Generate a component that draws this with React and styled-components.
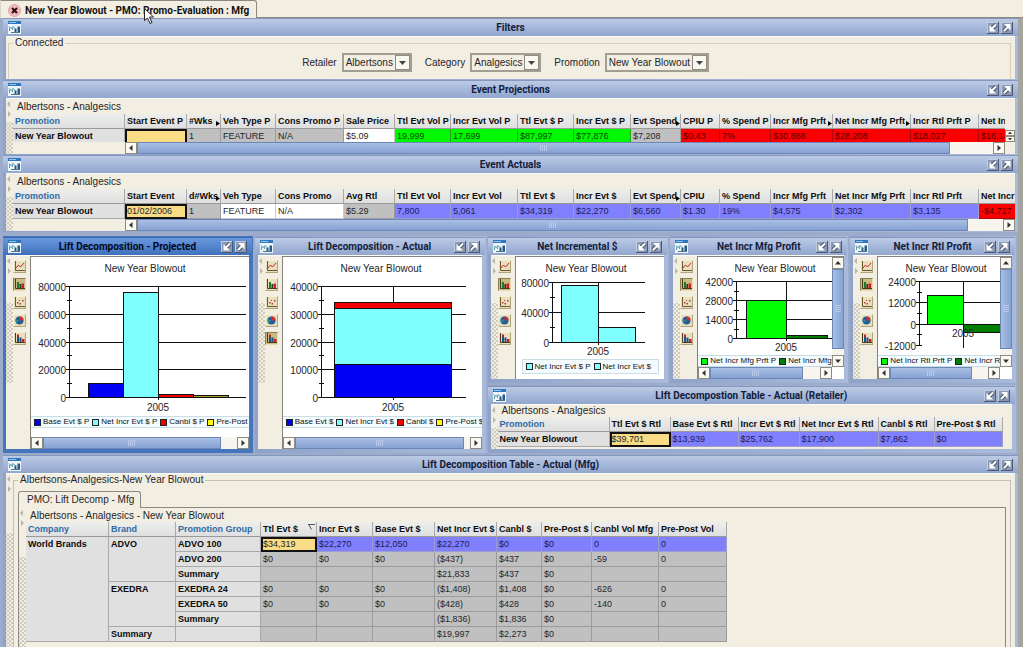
import { useState } from "react";
import styled, { createGlobalStyle, css } from "styled-components";

const GlobalStyle = createGlobalStyle`
  * {
    box-sizing: border-box;
  }
  body {
    margin: 0;
    background: #f2eee1;
    color: #26262a;
    font-family: "Liberation Sans", Arial, sans-serif;
    font-size: 10px;
    line-height: 12px;
  }
  button, select {
    font: inherit;
    color: inherit;
    margin: 0;
    padding: 0;
  }
`;

const Page = styled.div`
  display: flex;
  flex-direction: column;
  min-height: 100vh;
  overflow: hidden;
`;

const TabBar = styled.header`
  display: flex;
  height: 18px;
  border-bottom: 1px solid #8a8880;
`;

const MainTab = styled.div`
  position: relative;
  display: flex;
  align-items: center;
  gap: 4px;
  height: 18px;
  padding: 2px 7px 0 7px;
  background: #f2eee1;
  border: 1px solid #8a8880;
  border-left-color: #d8d4c8;
  border-bottom: 0;
  border-radius: 0 3px 0 0;
  font-family: Roboto, Arial, sans-serif;
  font-weight: bold;
  color: #111;
`;

const CloseButton = styled.button`
  display: flex;
  border: 0;
  background: none;
`;

const Pointer = styled.svg`
  position: absolute;
  left: 143px;
  top: 7px;
  z-index: 2;
`;

const Desktop = styled.main`
  display: flex;
  flex: 1;
  flex-direction: column;
  padding-left: 3px;
  background: #9cabc9;
  border-right: 5px solid #a5a59f;
`;

const WindowFrame = styled.section`
  display: flex;
  flex-direction: column;
  min-width: 0;
  flex: ${({ $grow }) => ($grow ? "1" : "none")};
  padding: ${({ $inner }) => ($inner ? "1px 4px 4px 3px" : "0 3px 1px")};
  background: ${({ $active }) =>
    $active ? "#4576bd" : "linear-gradient(90deg, #8fa3ca, #a9badb)"};
`;

const TitleBar = styled.div`
  display: grid;
  grid-template-columns: 1fr auto 1fr;
  align-items: center;
  flex: none;
  height: 18px;
  margin: 0 -3px;
  padding: 0 5px;
  border-top: 1px solid ${({ $active }) => ($active ? "#3c67ad" : "#8497bd")};
  background: ${({ $active }) =>
    $active
      ? "linear-gradient(#6a97dc, #5585cf 50%, #3f70bb)"
      : "linear-gradient(#bccae4, #a5b7da 50%, #92a7cd)"};
`;

const Title = styled.h2`
  margin: 0;
  font-family: Roboto, Arial, sans-serif;
  font-size: 10px;
  line-height: 12px;
  white-space: nowrap;
  color: ${({ $active }) => ($active ? "#00081c" : "#12203c")};
`;

const TitleButtons = styled.div`
  display: flex;
  justify-content: flex-end;
  gap: 2px;
`;

const TitleButton = styled.button`
  display: flex;
  border: 0;
  background: none;
`;

const WindowBody = styled.div`
  display: flex;
  flex: 1;
  min-height: 0;
  background: #f2eee1;
  border-top: 1px solid #fbfaf5;
`;

const Content = styled.div`
  flex: 1;
  min-width: 0;
`;

const GripColumn = styled.div`
  display: flex;
  flex-direction: column;
  flex: none;
  width: 7px;
  padding-top: 2px;
  overflow: hidden;
`;

const GripDots = styled.div`
  flex: 1;
  min-height: 0;
  max-height: ${({ $tall }) => ($tall ? "none" : "80px")};
  margin-top: ${({ $gap }) => $gap}px;
  background-image: radial-gradient(#cfcbbe 30%, transparent 40%),
    radial-gradient(#cfcbbe 30%, transparent 40%);
  background-size: 4px 4px;
  background-position: 0 0, 2px 2px;
`;

const Group = styled.fieldset`
  flex: 1;
  min-width: 0;
  margin: 0 4px 0 ${({ $indent }) => ($indent ? 0 : 2)}px;
  padding: 0 4px;
  border: 1px solid ${({ $indent }) => ($indent ? "#c4c0b2" : "#dccbbd")};
  border-bottom: 0;

  legend {
    padding: 0 2px;
  }
`;

const FilterRow = styled.div`
  display: flex;
  justify-content: center;
  gap: 13px;
  padding: 4px 8px 7px 0;
`;

const FilterLabel = styled.label`
  display: flex;
  align-items: center;
  gap: 5px;
`;

const SelectBox = styled.span`
  position: relative;
  display: flex;

  select {
    appearance: none;
    height: 19px;
    padding: 0 16px 0 2px;
    border: 2px solid #a39e92;
    border-radius: 0;
    background: #f2eee1;
  }

  svg {
    position: absolute;
    top: 2px;
    right: 2px;
    pointer-events: none;
  }
`;

const Caption = styled.div`
  height: ${({ $height = 15 }) => $height}px;
  padding: ${({ $height = 15 }) => ($height < 14 ? 0 : 2)}px 4px 0;
  white-space: nowrap;
`;

const TableClip = styled.div`
  overflow: hidden;
  height: ${({ $height }) => ($height ? `${$height}px` : "auto")};
`;

const DataTable = styled.table`
  table-layout: fixed;
  border-collapse: separate;
  border-spacing: 0;
  font-size: 9px;
  line-height: 12px;
  width: 1px;

  th,
  td {
    height: 15px;
    padding: 0 2px;
    overflow: hidden;
    white-space: nowrap;
    text-align: left;
    vertical-align: top;
    line-height: 14px;
  }
`;

const ColumnHead = styled.th`
  position: relative;
  background: linear-gradient(#eeeeec, #dfdfdf);
  border-right: 1px solid #a9a9a9;
  border-bottom: 1px solid #9a9a9a;
  color: ${({ $dimension }) => ($dimension ? "#2f6aa6" : "#0c0c0c")};
`;

const RowHead = styled.th`
  background: #e0e0e0;
  border-right: 1px solid #a9a9a9;
  border-bottom: 1px solid #a9a9a9;
  color: #0c0c0c;
`;

const Overflow = styled.svg`
  position: absolute;
  right: 0;
  bottom: 2px;
`;

const SortMark = styled.svg`
  position: absolute;
  right: 1px;
  top: 2px;
`;

const tones = {
  grey: css`
    background: #c0c0c0;
    border-color: #9b9b9b;
  `,
  white: css`
    background: #fff;
    border-color: #c8c8c8;
  `,
  green: css`
    background: #00f900;
    border-color: #27a027;
    color: #064d06;
  `,
  red: css`
    background: #fb0000;
    border-color: #b00808;
    color: #5c0000;
  `,
  blue: css`
    background: #8080ff;
    border-color: #9c9ccf;
    color: #1c1c5c;
  `,
  picked: css`
    background: #f8dc86;
    border-color: #111;
    outline: 2px solid #111;
    outline-offset: -2px;
  `,
};

const Cell = styled.td`
  border-style: solid;
  border-width: 0 1px 1px 0;
  ${({ $tone }) => tones[$tone]}
`;

const ProjectionArea = styled.div`
  display: flex;
  align-items: flex-end;
`;

const Spinner = styled.div`
  display: flex;
  flex-direction: column;
  flex: none;
  width: 10px;
  margin-bottom: 12px;
`;

const SpinButton = styled.button`
  display: flex;
  align-items: center;
  justify-content: center;
  height: 6px;
  border: 1px solid #8f8b80;
  background: #f5f3ea;
`;

const ScrollTrack = styled.div`
  display: flex;
  flex: none;
  flex-direction: ${({ $vertical }) => ($vertical ? "column" : "row")};
  width: ${({ $vertical }) => ($vertical ? "12px" : "auto")};
  height: ${({ $vertical }) => ($vertical ? "auto" : "12px")};
  margin-left: ${({ $start }) => $start || 0}px;
  margin-right: ${({ $end }) => $end || 0}px;
  background: #f7f5ee;
`;

const ScrollButton = styled.button`
  display: flex;
  align-items: center;
  justify-content: center;
  flex: none;
  width: 12px;
  height: 12px;
  border: 1px solid #8f8b80;
  background: #faf9f4;
`;

const ScrollSpace = styled.div`
  display: flex;
  flex: 1;
  flex-direction: inherit;
`;

const Thumb = styled.div`
  display: flex;
  align-items: center;
  justify-content: center;
  flex: none;
  border: 1px solid #6c86b8;
  background: linear-gradient(
    ${({ $vertical }) => ($vertical ? "90deg" : "180deg")},
    #a9bfe3,
    #86a2d3
  );
`;

const ChartRow = styled.div`
  display: grid;
  grid-template-columns: 250fr 231fr 529fr;
  gap: 2px;
  margin-top: 4px;
  margin-bottom: 2px;
  padding-right: 2px;

  section {
    flex: auto;
  }
`;

const RightColumn = styled.div`
  display: flex;
  flex-direction: column;
  gap: 2px;
  min-width: 0;
`;

const SmallCharts = styled.div`
  display: grid;
  grid-template-columns: 181fr 178fr 166fr;
  gap: 2px;
`;

const Tools = styled.div`
  display: flex;
  flex-direction: column;
  gap: 5px;
  flex: none;
  width: 17px;
  padding-top: 4px;
`;

const ToolButton = styled.button`
  display: flex;
  width: 13px;
  height: 13px;
  border: 1px solid;
  border-color: ${({ $pressed }) =>
    $pressed ? "#8e8150 #e8dcb0 #e8dcb0 #8e8150" : "#f6f0d8 #b0a47c #b0a47c #f6f0d8"};
  background: ${({ $pressed }) => ($pressed ? "#c9b983" : "#e9dfbf")};
`;

const ChartPane = styled.div`
  display: flex;
  flex: 1;
  flex-direction: column;
  min-width: 0;
  background: #fff;
  border-left: 1px solid #84827a;
  border-top: 1px solid #84827a;
`;

const ChartView = styled.div`
  display: flex;
  flex: 1;
`;

const ChartClip = styled.div`
  flex: 1;
  min-width: 0;
  overflow: hidden;

  svg {
    display: block;
  }
  text {
    font-size: 10px;
    fill: #26262a;
  }
`;

const Legend = styled.div`
  display: flex;
  align-items: center;
  gap: 3px;
  height: ${({ $boxed }) => ($boxed ? 15 : 12)}px;
  margin: ${({ $boxed }) => ($boxed ? "0 5px 0 6px" : "0")};
  padding-left: 3px;
  overflow: hidden;
  background: #f3fbff;
  border: 1px solid #c9dde2;
  border-width: ${({ $boxed }) => ($boxed ? "1px" : "1px 0")};
  font-size: 8px;
  line-height: 10px;
  white-space: nowrap;
`;

const LegendItem = styled.span`
  display: flex;
  align-items: center;
  gap: 2px;
  color: #111;
`;

const Swatch = styled.i`
  width: 7px;
  height: 7px;
  border: 1px solid #222;
  background: ${({ $color }) => $color};
`;

const SheetTabs = styled.div`
  display: flex;
  padding-top: 5px;
`;

const SheetTab = styled.button`
  height: 17px;
  margin-bottom: -1px;
  padding: 1px 6px 1px 8px;
  border: 1px solid #8a8880;
  border-bottom: 0;
  border-radius: 3px 3px 0 0;
  background: #f2eee1;
`;

const SheetPanel = styled.div`
  display: flex;
  min-height: 142px;
  border: 1px solid #8a8880;
  border-bottom: 0;
`;

const AppIcon = () => (
  <svg width="13" height="13" viewBox="0 0 13 13" aria-hidden="true">
    <rect width="13" height="13" fill="#eef6fb" />
    <rect width="13" height="3" fill="#2f77bd" />
    <path d="M1 1.5h7" stroke="#8fc4ec" />
    <path d="M1 5.500l2 2 2-2 2 2" stroke="#3784a8" fill="none" />
    <path d="M1.500 7v3M4.500 7v2" stroke="#5aa08c" fill="none" />
    <path d="M6.500 11V7.500h2V11zM9.500 11V5.500H12V11z" fill="#285a86" />
    <path d="M3 11.500h9" stroke="#4d7894" />
  </svg>
);

const arrows = {
  restore: { line: "M9 2.500 5 6.500", head: "M2.500 3v6.500H9z" },
  maximize: { line: "M3 9 7 5", head: "M9.500 8.500V2H3z" },
};

const WindowIcon = ({ kind }) => (
  <svg width="12" height="12" viewBox="0 0 12 12" aria-hidden="true">
    <rect width="12" height="12" fill="#8b98b3" />
    <path d="M0 11.500h11.500V0" stroke="#4d5972" fill="none" />
    <path d="M0 .5h11M.5 0v11" stroke="#c3cee2" fill="none" />
    <path d={arrows[kind].line} stroke="#4a566f" strokeWidth="4" fill="none" />
    <path d={arrows[kind].head} fill="#fff" />
    <path d={arrows[kind].line} stroke="#fff" strokeWidth="2" fill="none" />
  </svg>
);

const triangles = {
  left: "M4.500 0v6L1 3z",
  right: "M1.500 0v6L5 3z",
  up: "M0 4.500h6L3 1z",
  down: "M0 1.500h6L3 5z",
};

const Triangle = ({ to, size = 6, fill = "#333" }) => (
  <svg width={size} height={size} viewBox="0 0 6 6" aria-hidden="true">
    <path d={triangles[to]} fill={fill} />
  </svg>
);

function Grip({ tall, gap = 4 }) {
  return (
    <GripColumn>
      <svg width="6" height="17" viewBox="0 0 6 17" aria-hidden="true">
        <path d="M4 0v6L1 3zM2 10v6l3-3z" fill="#b9b5a8" />
      </svg>
      <GripDots $tall={tall} $gap={gap} />
    </GripColumn>
  );
}

function Window({ title, active, inner, grow, children }) {
  return (
    <WindowFrame $active={active} $inner={inner} $grow={grow}>
      <TitleBar $active={active}>
        <AppIcon />
        <Title $active={active}>{title}</Title>
        <TitleButtons>
          <TitleButton aria-label="Restore">
            <WindowIcon kind="restore" />
          </TitleButton>
          <TitleButton aria-label="Maximize">
            <WindowIcon kind="maximize" />
          </TitleButton>
        </TitleButtons>
      </TitleBar>
      <WindowBody>{children}</WindowBody>
    </WindowFrame>
  );
}

function Scrollbar({ vertical, size, start, end }) {
  const length = vertical ? { height: size } : { width: size };
  return (
    <ScrollTrack $vertical={vertical} $start={start} $end={end}>
      <ScrollButton aria-label="Scroll back">
        <Triangle to={vertical ? "up" : "left"} />
      </ScrollButton>
      <ScrollSpace>
        <Thumb $vertical={vertical} style={length}>
          <svg width="8" height="8" viewBox="0 0 8 8" aria-hidden="true">
            <path
              d={vertical ? "M1 .5h6M1 2.500h6M1 4.500h6M1 6.500h6" : "M.5 1v6M2.500 1v6M4.500 1v6M6.500 1v6"}
              stroke="#b9cbea"
            />
          </svg>
        </Thumb>
      </ScrollSpace>
      <ScrollButton aria-label="Scroll forward">
        <Triangle to={vertical ? "down" : "right"} />
      </ScrollButton>
    </ScrollTrack>
  );
}

function Filter({ label, options }) {
  const [value, setValue] = useState(options[0]);
  return (
    <FilterLabel>
      {label}
      <SelectBox>
        <select value={value} onChange={(e) => setValue(e.target.value)}>
          {options.map((option) => (
            <option key={option}>{option}</option>
          ))}
        </select>
        <svg width="15" height="15" viewBox="0 0 15 15" aria-hidden="true">
          <rect x=".5" y=".5" width="14" height="14" fill="#f8f7f0" stroke="#8f8b80" />
          <path d="M4 6h7l-3.500 4z" fill="#444" />
        </svg>
      </SelectBox>
    </FilterLabel>
  );
}

// columns: [label, width, flag]
function Columns({ columns, dimensions = 1 }) {
  return (
    <>
      <colgroup>
        {columns.map(([label, width]) => (
          <col key={label} width={width} />
        ))}
      </colgroup>
      <thead>
        <tr>
          {columns.map(([label, , flag], i) => (
            <ColumnHead key={label} $dimension={i < dimensions} scope="col">
              {label}
              {flag === "more" && (
                <Overflow width="4" height="5" viewBox="0 0 4 5">
                  <path d="M0 0v5l4-2.500z" />
                </Overflow>
              )}
              {flag === "sorted" && (
                <SortMark width="7" height="6" viewBox="0 0 7 6">
                  <path d="M0 .5h7M1 1l2.500 4.500" stroke="#555" fill="none" />
                </SortMark>
              )}
            </ColumnHead>
          ))}
        </tr>
      </thead>
    </>
  );
}

function EventTable({ columns, cells }) {
  return (
    <DataTable>
      <Columns columns={columns} />
      <tbody>
        <tr>
          <RowHead scope="row">New Year Blowout</RowHead>
          {cells.map(([text, tone], i) => (
            <Cell key={i} $tone={tone}>
              {text}
            </Cell>
          ))}
        </tr>
      </tbody>
    </DataTable>
  );
}

const projectionColumns = [
  ["Promotion", 112],
  ["Start Event P", 62],
  ["#Wks", 34, "more"],
  ["Veh Type P", 55],
  ["Cons Promo P", 68],
  ["Sale Price", 51],
  ["Ttl Evt Vol P", 56],
  ["Incr Evt Vol P", 67],
  ["Ttl Evt $ P", 56],
  ["Incr Evt $ P", 57],
  ["Evt Spend", 50, "more"],
  ["CPIU P", 39],
  ["% Spend P", 51],
  ["Incr Mfg Prft", 62, "more"],
  ["Net Incr Mfg Prft", 78, "more"],
  ["Incr Rtl Prft P", 68],
  ["Net Incr Rtl Prft P", 80],
];

const projectionCells = [
  ["", "picked"],
  ["1", "grey"],
  ["FEATURE", "grey"],
  ["N/A", "grey"],
  ["$5.09", "white"],
  ["19,999", "green"],
  ["17,699", "green"],
  ["$87,997", "green"],
  ["$77,876", "green"],
  ["$7,208", "grey"],
  ["$0.43", "red"],
  ["7%", "red"],
  ["$30,888", "red"],
  ["$28,208", "red"],
  ["$18,027", "red"],
  ["$16,149", "red"],
];

const actualColumns = [
  ["Promotion", 112],
  ["Start Event", 62],
  ["d#Wks", 34, "more"],
  ["Veh Type", 55],
  ["Cons Promo", 68],
  ["Avg Rtl", 51],
  ["Ttl Evt Vol", 56],
  ["Incr Evt Vol", 67],
  ["Ttl Evt $", 56],
  ["Incr Evt $", 57],
  ["Evt Spend", 50, "more"],
  ["CPIU", 39],
  ["% Spend", 51],
  ["Incr Mfg Prft", 62],
  ["Net Incr Mfg Prft", 78],
  ["Incr Rtl Prft", 68],
  ["Net Incr Rtl Prft", 80],
];

const actualCells = [
  ["01/02/2006", "picked"],
  ["1", "grey"],
  ["FEATURE", "white"],
  ["N/A", "white"],
  ["$5.29", "grey"],
  ["7,800", "blue"],
  ["5,061", "blue"],
  ["$34,319", "blue"],
  ["$22,270", "blue"],
  ["$6,560", "blue"],
  ["$1.30", "blue"],
  ["19%", "blue"],
  ["$4,575", "blue"],
  ["$2,302", "blue"],
  ["$3,135", "blue"],
  ["-$4,727", "red"],
];

const retailerColumns = [
  ["Promotion", 112],
  ["Ttl Evt $ Rtl", 61],
  ["Base Evt $ Rtl", 68],
  ["Incr Evt $ Rtl", 61],
  ["Net Incr Evt $ Rtl", 79],
  ["Canbl $ Rtl", 56],
  ["Pre-Post $ Rtl", 68],
];

const retailerCells = [
  ["$39,701", "picked"],
  ["$13,939", "blue"],
  ["$25,762", "blue"],
  ["$17,900", "blue"],
  ["$7,862", "blue"],
  ["$0", "blue"],
];

const mfgColumns = [
  ["Company", 83],
  ["Brand", 67],
  ["Promotion Group", 85],
  ["Ttl Evt $", 56, "sorted"],
  ["Incr Evt $", 56],
  ["Base Evt $", 62],
  ["Net Incr Evt $", 62],
  ["Canbl $", 45],
  ["Pre-Post $", 50],
  ["Canbl Vol Mfg", 67],
  ["Pre-Post Vol", 68],
];

const mfgRows = [
  {
    heads: [["World Brands", 7], ["ADVO", 3], ["ADVO 100", 1]],
    values: ["$34,319", "$22,270", "$12,050", "$22,270", "$0", "$0", "0", "0"],
  },
  {
    heads: [["ADVO 200", 1]],
    values: ["$0", "$0", "$0", "($437)", "$437", "$0", "-59", "0"],
  },
  {
    heads: [["Summary", 1]],
    values: ["", "", "", "$21,833", "$437", "$0", "", ""],
  },
  {
    heads: [["EXEDRA", 3], ["EXEDRA 24", 1]],
    values: ["$0", "$0", "$0", "($1,408)", "$1,408", "$0", "-626", "0"],
  },
  {
    heads: [["EXEDRA 50", 1]],
    values: ["$0", "$0", "$0", "($428)", "$428", "$0", "-140", "0"],
  },
  {
    heads: [["Summary", 1]],
    values: ["", "", "", "($1,836)", "$1,836", "$0", "", ""],
  },
  {
    heads: [["Summary", 1], ["", 1]],
    values: ["", "", "", "$19,997", "$2,273", "$0", "", ""],
  },
];

const toolIcons = {
  "Line chart": (
    <>
      <path d="M1.500 0v9.500H11" stroke="#6b5a30" fill="none" />
      <path d="M2 7 4.500 4 6.500 6 10 2" stroke="#c22a2a" fill="none" />
    </>
  ),
  "Bar chart": (
    <>
      <path d="M1.500 0v9.500H11" stroke="#4a3b18" fill="none" />
      <path d="M3 3h2v6H3z" fill="#1d7a2a" />
      <path d="M5.500 5h1.500v4H5.500z" fill="#233" />
      <path d="M7.500 4.500H10V9H7.500z" fill="#c91f1f" />
    </>
  ),
  "Scatter chart": (
    <>
      <path d="M1.500 0v9.500H11" stroke="#6b5a30" fill="none" />
      <path d="M3 5h1.500v1.500H3zM5.500 6H7v1.500H5.500zM8 3h1.500v1.500H8zM5 3h1v1H5z" fill="#b23a3a" />
    </>
  ),
  "Pie chart": (
    <>
      <circle cx="5.500" cy="5.500" r="4" fill="#1f5f9c" />
      <path d="M5.500 5.500v-4a4 4 0 0 1 4 4z" fill="#cf2b2b" />
      <path d="M5.500 5.500 2.500 8A4 4 0 0 1 1.600 4z" fill="#2b8a8a" />
    </>
  ),
  "Stacked chart": (
    <>
      <path d="M1.500 0v9.500H11" stroke="#4a3b18" fill="none" />
      <path d="M3 1.500h2V4H3zM8 6h2.500v3H8z" fill="#c91f1f" />
      <path d="M3 4h2v5H3zM5.500 4.500h2V9h-2z" fill="#1b4f86" />
    </>
  ),
};

const CYAN = "#80ffff";
const BLUE = "#0000f4";
const RED = "#f40000";
const YELLOW = "#ffff00";
const GREEN = "#00ff00";
const DARK_GREEN = "#008000";

function Chart({ width, height, plot, titleX, labelX, labelY, ticks, bars }) {
  const { left, right, top, bottom } = plot;
  const max = ticks[ticks.length - 1];
  const min = ticks[0];
  const y = (value) =>
    Math.round(bottom - ((value - min) / (max - min)) * (bottom - top)) + 0.5;
  const half = (ticks[1] - ticks[0]) / 2;

  return (
    <svg width={width} height={height} role="img" aria-label="New Year Blowout, 2005">
      <text x={titleX} y="15" textAnchor="middle">
        New Year Blowout
      </text>
      {ticks.map((tick) => (
        <g key={tick}>
          <text x={left - 3} y={y(tick) + 4} textAnchor="end">
            {tick}
          </text>
          <path
            d={`M${left - 3} ${y(tick)}H${tick < 0 ? left + 3 : right}`}
            stroke="#111"
          />
          {tick !== max && (
            <path d={`M${left - 2} ${y(tick + half)}h5`} stroke="#111" />
          )}
        </g>
      ))}
      <path d={`M${left + 0.5} ${top}V${bottom + 1}`} stroke="#111" />
      <path d={`M${labelX + 0.5} ${top}V${bottom + 3}`} stroke="#111" />
      {bars.map(({ x, w, from = 0, to, color }) => (
        <rect
          key={`${x}-${from}`}
          x={x + 0.5}
          y={Math.min(y(from), y(to))}
          width={w}
          height={Math.abs(y(from) - y(to))}
          fill={color}
          stroke="#111"
        />
      ))}
      <text x={labelX} y={labelY} textAnchor="middle">
        2005
      </text>
    </svg>
  );
}

function ChartWindow({ title, active, pressed = "Bar chart", chart, legend, boxed, scroll, vscroll }) {
  return (
    <Window title={title} active={active} inner>
      <Grip gap={28} />
      <Tools>
        {Object.entries(toolIcons).map(([name, icon]) => (
          <ToolButton key={name} aria-label={name} $pressed={name === pressed}>
            <svg width="11" height="11" viewBox="0 0 11 11">
              {icon}
            </svg>
          </ToolButton>
        ))}
      </Tools>
      <ChartPane>
        <ChartView>
          <ChartClip>
            <Chart {...chart} />
            <Legend $boxed={boxed}>
              {legend.map(([label, color]) => (
                <LegendItem key={label}>
                  <Swatch $color={color} />
                  {label}
                </LegendItem>
              ))}
            </Legend>
          </ChartClip>
          {vscroll && <Scrollbar vertical size="93%" />}
        </ChartView>
        {scroll && <Scrollbar size={scroll} end={vscroll ? 12 : 0} />}
      </ChartPane>
    </Window>
  );
}

const projectedChart = {
  width: 217,
  height: 159,
  plot: { left: 38, right: 215, top: 29, bottom: 140 },
  titleX: 114,
  labelX: 127,
  labelY: 154,
  ticks: [0, 20000, 40000, 60000, 80000],
  bars: [
    { x: 57, w: 35, to: 9900, color: BLUE },
    { x: 92, w: 35, to: 75500, color: CYAN },
    { x: 127, w: 35, to: 1900, color: RED },
    { x: 162, w: 35, to: 1100, color: "#a0a030" },
  ],
};

const actualChart = {
  width: 198,
  height: 159,
  plot: { left: 38, right: 183, top: 29, bottom: 140 },
  titleX: 98,
  labelX: 110,
  labelY: 154,
  ticks: [0, 10000, 20000, 30000, 40000],
  bars: [
    { x: 51, w: 117, to: 12050, color: BLUE },
    { x: 51, w: 117, from: 12050, to: 32047, color: CYAN },
    { x: 51, w: 117, from: 32047, to: 34319, color: RED },
  ],
};

const incrementalChart = {
  width: 146,
  height: 102,
  plot: { left: 36, right: 129, top: 25, bottom: 85 },
  titleX: 70,
  labelX: 82,
  labelY: 98,
  ticks: [0, 40000, 80000],
  bars: [
    { x: 45, w: 37, to: 75500, color: CYAN },
    { x: 82, w: 37, to: 20500, color: CYAN },
  ],
};

const mfgProfitChart = {
  width: 150,
  height: 98,
  plot: { left: 38, right: 150, top: 24, bottom: 81 },
  titleX: 77,
  labelX: 88,
  labelY: 94,
  ticks: [0, 14000, 28000, 42000],
  bars: [
    { x: 48, w: 40, to: 28208, color: GREEN },
    { x: 88, w: 41, to: 2302, color: DARK_GREEN },
  ],
};

const rtlProfitChart = {
  width: 150,
  height: 98,
  plot: { left: 41, right: 150, top: 24, bottom: 88 },
  titleX: 68,
  labelX: 85,
  labelY: 80,
  ticks: [-12000, 0, 12000, 24000],
  bars: [
    { x: 49, w: 36, to: 16149, color: GREEN },
    { x: 85, w: 40, to: -4727, color: DARK_GREEN },
  ],
};

function MfgTable() {
  return (
    <DataTable>
      <Columns columns={mfgColumns} dimensions={3} />
      <tbody>
        {mfgRows.map(({ heads, values }, row) => (
          <tr key={row}>
            {heads.map(([text, span], i) => (
              <RowHead key={i} scope="row" rowSpan={span}>
                {text}
              </RowHead>
            ))}
            {values.map((value, i) => (
              <Cell key={i} $tone={row > 0 ? "grey" : i > 0 ? "blue" : "picked"}>
                {value}
              </Cell>
            ))}
          </tr>
        ))}
      </tbody>
    </DataTable>
  );
}

export default function App() {
  return (
    <Page>
      <GlobalStyle />
      <TabBar>
        <MainTab>
          <CloseButton aria-label="Close">
            <svg width="13" height="13" viewBox="0 0 13 13">
              <circle cx="6.500" cy="6.500" r="6" fill="#efb9bd" stroke="#e3a2a8" />
              <path d="M4 4l5 5M9 4 4 9" stroke="#2a0a0c" strokeWidth="2" />
            </svg>
          </CloseButton>
          New Year Blowout - PMO: Promo-Evaluation : Mfg
          <Pointer width="11" height="17" viewBox="0 0 11 17" aria-hidden="true">
            <path d="M.5.5v12l3-2.500 2.500 5.500 2-1L5.500 9h4z" fill="#fff" stroke="#222" />
          </Pointer>
        </MainTab>
      </TabBar>
      <Desktop>
        <Window title="Filters">
          <Group>
            <legend>Connected</legend>
            <FilterRow>
              <Filter label="Retailer" options={["Albertsons"]} />
              <Filter label="Category" options={["Analgesics"]} />
              <Filter label="Promotion" options={["New Year Blowout"]} />
            </FilterRow>
          </Group>
        </Window>

        <Window title="Event Projections">
          <Grip />
          <Content>
            <Caption>Albertsons - Analgesics</Caption>
            <ProjectionArea>
              <Content>
                <TableClip $height={28}>
                  <EventTable columns={projectionColumns} cells={projectionCells} />
                </TableClip>
                <Scrollbar size="95%" start={112} />
              </Content>
              <Spinner>
                <SpinButton aria-label="Previous row">
                  <Triangle to="up" size={4} />
                </SpinButton>
                <SpinButton aria-label="Next row">
                  <Triangle to="down" size={4} />
                </SpinButton>
              </Spinner>
            </ProjectionArea>
          </Content>
        </Window>

        <Window title="Event Actuals">
          <Grip />
          <Content>
            <Caption>Albertsons - Analgesics</Caption>
            <TableClip>
              <EventTable columns={actualColumns} cells={actualCells} />
            </TableClip>
            <Scrollbar size="96%" start={112} />
          </Content>
        </Window>

        <ChartRow>
          <ChartWindow
            active
            title="Lift Decomposition - Projected"
            chart={projectedChart}
            scroll="92%"
            legend={[
              ["Base Evt $ P", BLUE],
              ["Net Incr Evt $ P", CYAN],
              ["Canbl $ P", RED],
              ["Pre-Post $ P", YELLOW],
            ]}
          />
          <ChartWindow
            title="Lift Decomposition - Actual"
            pressed="Stacked chart"
            chart={actualChart}
            scroll="97%"
            legend={[
              ["Base Evt $", BLUE],
              ["Net Incr Evt $", CYAN],
              ["Canbl $", RED],
              ["Pre-Post $", YELLOW],
            ]}
          />
          <RightColumn>
            <SmallCharts>
              <ChartWindow
                title="Net Incremental $"
                chart={incrementalChart}
                boxed
                legend={[
                  ["Net Incr Evt $ P", CYAN],
                  ["Net Incr Evt $", CYAN],
                ]}
              />
              <ChartWindow
                title="Net Incr Mfg Profit"
                chart={mfgProfitChart}
                scroll="84%"
                vscroll
                legend={[
                  ["Net Incr Mfg Prft P", GREEN],
                  ["Net Incr Mfg Prft", DARK_GREEN],
                ]}
              />
              <ChartWindow
                title="Net Incr Rtl Profit"
                chart={rtlProfitChart}
                scroll="84%"
                vscroll
                legend={[
                  ["Net Incr Rtl Prft P", GREEN],
                  ["Net Incr Rtl Prft", DARK_GREEN],
                ]}
              />
            </SmallCharts>
            <Window title="LIft Decompostion Table - Actual (Retailer)" inner>
              <Grip />
              <Content>
                <Caption $height={12}>Albertsons - Analgesics</Caption>
                <TableClip $height={32}>
                  <EventTable columns={retailerColumns} cells={retailerCells} />
                </TableClip>
              </Content>
            </Window>
          </RightColumn>
        </ChartRow>

        <Window title="Lift Decomposition Table - Actual (Mfg)" grow>
          <Grip tall gap={40} />
          <Group $indent>
            <legend>Albertsons-Analgesics-New Year Blowout</legend>
            <SheetTabs role="tablist">
              <SheetTab role="tab" aria-selected="true">
                PMO: Lift Decomp - Mfg
              </SheetTab>
            </SheetTabs>
            <SheetPanel role="tabpanel">
              <Grip tall gap={30} />
              <Content>
                <Caption $height={14}>Albertsons - Analgesics - New Year Blowout</Caption>
                <TableClip>
                  <MfgTable />
                </TableClip>
              </Content>
            </SheetPanel>
          </Group>
        </Window>
      </Desktop>
    </Page>
  );
}
